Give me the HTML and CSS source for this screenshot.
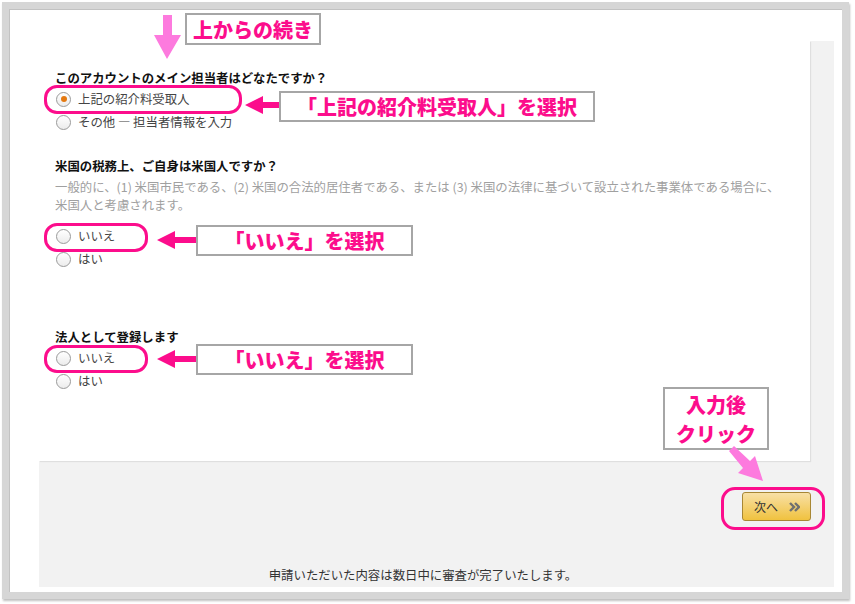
FILE: index.html
```html
<!DOCTYPE html>
<html lang="ja">
<head>
  <meta charset="UTF-8">
  <title>担当者情報</title>
  <link rel="stylesheet" href="styles.css">
</head>
<body>
  <div class="shot">
    <div class="frame">
      <div class="panel">
        <div class="card">
          <div class="question">このアカウントのメイン担当者はどなたですか？</div>
          <label class="option"><span class="radio checked"></span>上記の紹介料受取人</label>
          <label class="option"><span class="radio"></span>その他 — 担当者情報を入力</label>

          <div class="question gap">米国の税務上、ご自身は米国人ですか？</div>
          <p class="desc">一般的に、(1) 米国市民である、(2) 米国の合法的居住者である、または (3) 米国の法律に基づいて設立された事業体である場合に、<br>米国人と考慮されます。</p>
          <label class="option first"><span class="radio"></span>いいえ</label>
          <label class="option"><span class="radio"></span>はい</label>

          <div class="question gap-lg">法人として登録します</div>
          <label class="option"><span class="radio"></span>いいえ</label>
          <label class="option"><span class="radio"></span>はい</label>
        </div>
        <div class="actions">
          <button class="next">次へ
            <svg width="11" height="10" viewBox="0 0 11 10"><path d="M1 1l4 4-4 4M6 1l4 4-4 4" fill="none" stroke="#707070" stroke-width="2.4"/></svg>
          </button>
        </div>
        <p class="note">申請いただいた内容は数日中に審査が完了いたします。</p>
      </div>
    </div>

    <!-- annotations -->
    <svg class="mark down" width="30" height="48" viewBox="0 0 30 48"><path d="M11 2h9v20h9L15 46 2 22h9z" fill="#fd7ade"/></svg>
    <div class="tag t-top">上からの続き</div>

    <div class="ring r1"></div>
    <svg class="mark a1" width="36" height="22" viewBox="0 0 36 22"><path d="M1 11L19 2v6h16v6H19v6z" fill="#fc0d8c"/></svg>
    <div class="tag t1">「上記の紹介料受取人」を選択</div>

    <div class="ring r2"></div>
    <svg class="mark a2" width="42" height="22" viewBox="0 0 42 22"><path d="M1 11L19 2v6h22v6H19v6z" fill="#fc0d8c"/></svg>
    <div class="tag t2">「いいえ」を選択</div>

    <div class="ring r3"></div>
    <svg class="mark a3" width="42" height="22" viewBox="0 0 42 22"><path d="M1 11L19 2v6h22v6H19v6z" fill="#fc0d8c"/></svg>
    <div class="tag t3">「いいえ」を選択</div>

    <div class="tag t4">入力後<br>クリック</div>
    <svg class="mark diag" width="46" height="40" viewBox="725 443 46 40"><path d="M729 449l5-5 16 15 5-5 8 25-25-8 5-5z" fill="#fd7ade"/></svg>
    <div class="ring r4"></div>
  </div>
</body>
</html>
```

FILE: styles.css
```css
body {
  margin: 0;
  background-color: #fff;
  font-family: "Noto Sans CJK JP", "Noto Sans", sans-serif;
  color: #333;
}
.shot {
  position: relative;
  width: 855px;
  height: 604px;
}
.frame {
  margin: 2px;
  width: 833px;
  height: 583px;
  border: 7px solid #d6d6d6;
  background-color: #fff;
  box-shadow: inset 1px 1px 0 #c2c2c2, 1px 2px 2px rgba(0, 0, 0, 0.25);
}
.panel {
  margin: 32px 0 0 30px;
  width: 795px;
  height: 546px;
  background-color: #f2f2f2;
  display: flex;
  flex-direction: column;
}
.card {
  width: 771px;
  height: 420px;
  box-sizing: border-box;
  padding: 28px 16px;
  background-color: #fff;
  box-shadow: 1px 1px 1px rgba(0, 0, 0, 0.08);
}
.question {
  font-size: 12.4px;
  font-weight: bold;
  line-height: 18px;
  color: #111;
}
.question.gap {
  margin-top: 24px;
}
.question.gap-lg {
  margin-top: 58px;
}
.desc {
  margin: 3px 0 0;
  font-size: 12.4px;
  line-height: 18px;
  color: #a0a0a0;
}
.option {
  display: flex;
  align-items: center;
  height: 23px;
  font-size: 12.4px;
  color: #444;
}
.option .radio {
  margin-top: 1px;
}
.option.first {
  margin-top: 10px;
}
.radio {
  width: 15px;
  height: 15px;
  margin: 0 7px 0 1px;
  box-sizing: border-box;
  border: 1px solid #9a9a9a;
  border-radius: 50%;
  background: linear-gradient(#fff, #ececec);
  display: flex;
  align-items: center;
  justify-content: center;
}
.radio.checked::after {
  content: "";
  width: 6px;
  height: 6px;
  border-radius: 50%;
  background-color: #e47911;
}
.actions {
  margin-top: 31px;
  width: 772px;
  display: flex;
  justify-content: flex-end;
}
.next {
  width: 69px;
  height: 29px;
  padding: 0 10px 0 11px;
  display: flex;
  align-items: center;
  justify-content: space-between;
  border: 1px solid #a88734;
  border-radius: 3px;
  background: linear-gradient(#f8e0a6, #f0c23f);
  font-family: inherit;
  font-size: 12px;
  color: #333;
}
.note {
  margin: 45px 0 0;
  width: 768px;
  text-align: center;
  font-size: 12.4px;
  line-height: 18px;
  color: #333;
}
.mark {
  position: absolute;
}
.down { left: 152px; top: 11px; }
.a1 { left: 244px; top: 92px; }
.a2 { left: 156px; top: 227px; }
.a3 { left: 156px; top: 346px; }
.diag { left: 725px; top: 443px; }
.ring {
  position: absolute;
  box-sizing: border-box;
  border: 3.5px solid #fc0d8c;
  border-radius: 13px;
}
.r1 { left: 44px; top: 83px; width: 198px; height: 29px; }
.r2 { left: 44px; top: 221px; width: 104px; height: 29px; }
.r3 { left: 44px; top: 343px; width: 104px; height: 28px; }
.r4 { left: 721px; top: 485px; width: 104px; height: 43px; border-radius: 14px; }
.tag {
  position: absolute;
  box-sizing: border-box;
  display: flex;
  align-items: center;
  justify-content: center;
  border: 2px solid #a6a6a6;
  background-color: #fff;
  color: #fc0d8c;
  font-size: 20px;
  font-weight: 900;
  line-height: 29px;
  text-align: center;
}
.t-top { left: 185px; top: 11px; width: 136px; height: 32px; }
.t1 { left: 279px; top: 89px; width: 316px; height: 31px; }
.t2 { left: 196px; top: 223px; width: 217px; height: 31px; }
.t3 { left: 196px; top: 342px; width: 217px; height: 31px; }
.t4 { left: 663px; top: 385px; width: 106px; height: 63px; }
```
